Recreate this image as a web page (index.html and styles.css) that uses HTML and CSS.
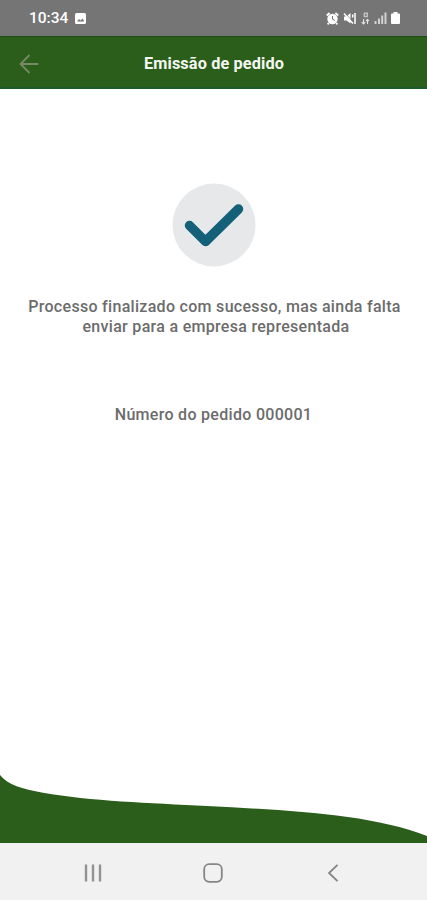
FILE: index.html
```
<!DOCTYPE html>
<html lang="pt-BR">
<head>
    <meta charset="UTF-8">
    <meta name="viewport" content="width=device-width, initial-scale=1.0">
    <title>Emissão de pedido</title>
    <link rel="stylesheet" href="styles.css">
</head>
<body>

    <div class="status-bar">
        <div class="status-left">
            <span class="clock">10:34</span>
            <svg width="11" height="11" viewBox="0 0 11 11">
                <rect width="11" height="11" rx="1.5" fill="#fff"/>
                <path d="M2 8.5L4 6L5.5 7.5L7.5 5.5L9.3 8.5Z" fill="#757575"/>
            </svg>
        </div>
        <div class="status-right">
            <!-- alarme -->
            <svg width="13" height="13" viewBox="0 0 13 13" fill="none" stroke="#fff">
                <circle cx="6.5" cy="7" r="5.2" fill="#fff" stroke="none"/>
                <path d="M0.8 3.5L3.6 1M12.2 3.5L9.4 1M2.8 11L1.6 12.4M10.2 11L11.4 12.4" stroke-width="1.8"/>
                <path d="M6.5 4V7.2L8.8 8.4" stroke="#757575" stroke-width="1"/>
            </svg>
            <!-- sem som -->
            <svg width="14" height="13" viewBox="0 0 14 13" fill="none" stroke="#fff">
                <path d="M1 4.5H3.5L7.5 1V11.5L3.5 8.5H1Z" fill="#fff" stroke="none"/>
                <path d="M1 1.5L10 11.5M12 1V12M9.7 2.5V5.5" stroke-width="1.5"/>
                <path d="M2.3 1.2L9.3 9" stroke="#757575" stroke-width="0.6"/>
            </svg>
            <!-- dados -->
            <svg width="9" height="13" viewBox="0 0 9 13" fill="none" stroke="#e2e2e2">
                <path d="M3 1.3H7M3 4.5H7M3.3 1V5M6.3 1V5" stroke-width="1.4" opacity="0.7"/>
                <path d="M2.5 7V12M0.8 10.2L2.5 12L4.2 10.2M6.5 12V7.5M5 9L6.5 7.5L8 9" stroke-width="1.1"/>
            </svg>
            <!-- sinal -->
            <svg width="13" height="12" viewBox="0 0 13 12" fill="#d2d2d2">
                <rect x="0.5" y="9" width="2" height="3"/>
                <rect x="4" y="6.5" width="2" height="5.5"/>
                <rect x="7.2" y="3.5" width="2" height="8.5"/>
                <rect x="10.5" y="0.5" width="2" height="11.5"/>
            </svg>
            <!-- bateria -->
            <svg width="9" height="12" viewBox="0 0 9 12" fill="#fff">
                <path d="M2.5 0H6.5V1.5H8Q9 1.5 9 2.5V11Q9 12 8 12H1Q0 12 0 11V2.5Q0 1.5 1 1.5H2.5Z"/>
            </svg>
        </div>
    </div>

    <header class="app-bar">
        <svg class="back" width="20" height="20" viewBox="0 0 20 20" fill="none" stroke="#788868" stroke-width="1.8">
            <path d="M19.3 10H1.5M10.5 1L1.5 10L10.5 19"/>
        </svg>
        <h1>Emissão de pedido</h1>
    </header>

    <main class="content">
        <svg class="check" width="84" height="84" viewBox="0 0 84 84">
            <circle cx="42" cy="42" r="41.5" fill="#e6e8ea"/>
            <path d="M17.5 42.5L33.5 58.5L66.5 26" fill="none" stroke="#136078" stroke-width="9.5" stroke-linecap="round" stroke-linejoin="round"/>
        </svg>
        <p class="message"><span>Processo finalizado com sucesso, mas ainda falta</span><br><span class="second">enviar para a empresa representada</span></p>
        <p class="order">Número do pedido 000001</p>
    </main>

    <svg class="wave" width="427" height="73" viewBox="0 0 427 73">
        <path d="M0 5C8 15 22 19 43 22.7C90 31 150 33 207 36C290 40.5 370 44 427 66V73H0Z" fill="#2a5e1a"/>
    </svg>

    <nav class="nav-bar">
        <svg width="20" height="20" viewBox="0 0 20 20" stroke="#929292" stroke-width="2.4">
            <path d="M3 1.5V18.5M10 1.5V18.5M17 1.5V18.5"/>
        </svg>
        <svg width="20" height="20" viewBox="0 0 20 20" fill="none" stroke="#858585" stroke-width="1.8">
            <rect x="1.2" y="1.2" width="17.6" height="17.6" rx="5"/>
        </svg>
        <svg width="20" height="20" viewBox="0 0 20 20" fill="none" stroke="#858585" stroke-width="1.8">
            <path d="M14.5 1.8L6 10L14.5 18.2"/>
        </svg>
    </nav>

</body>
</html>
```

FILE: styles.css
```
body {
    margin: 0;
    height: 900px;
    display: flex;
    flex-direction: column;
    background: #fff;
    font-family: Roboto, sans-serif;
    overflow: hidden;
}
svg {
    display: block;
    flex: none;
}
.status-bar {
    box-sizing: border-box;
    height: 36px;
    padding: 0 27px 0 29px;
    display: flex;
    justify-content: space-between;
    align-items: center;
    background: #757575;
    color: #fff;
}
.status-left {
    display: flex;
    align-items: center;
    gap: 7px;
}
.clock {
    font-size: 15.5px;
    font-weight: 500;
}
.status-right {
    display: flex;
    align-items: center;
    gap: 4px;
}
.app-bar {
    box-sizing: border-box;
    height: 53px;
    display: grid;
    grid-template-columns: 60px 1fr 60px;
    align-items: center;
    background: #2a5e1a;
    border-top: 1px solid #1f4c12;
    border-bottom: 2px solid #1c5a2c;
}
.back {
    margin: 4px 0 0 19px;
}
h1 {
    margin: 2px 0 0 1px;
    text-align: center;
    color: #f4f7f1;
    font-size: 16.3px;
    font-weight: 700;
    letter-spacing: 0.12px;
    white-space: nowrap;
}
.content {
    flex: 1;
    display: flex;
    flex-direction: column;
    align-items: center;
    padding-top: 94px;
    color: #6c6c6c;
    font-size: 16px;
    font-weight: 500;
    line-height: 20px;
    letter-spacing: 0.3px;
    text-align: center;
    white-space: nowrap;
}
.check {
    margin-left: 1px;
}
.message {
    margin: 30px 0 0 2px;
}
.second {
    margin-left: 3px;
}
.order {
    margin: 68px 0 0;
}
.wave {
    width: 100%;
}
.nav-bar {
    box-sizing: border-box;
    height: 57px;
    padding: 3px 84px 0 83px;
    display: flex;
    justify-content: space-between;
    align-items: center;
    background: #f1f1f1;
}
```
